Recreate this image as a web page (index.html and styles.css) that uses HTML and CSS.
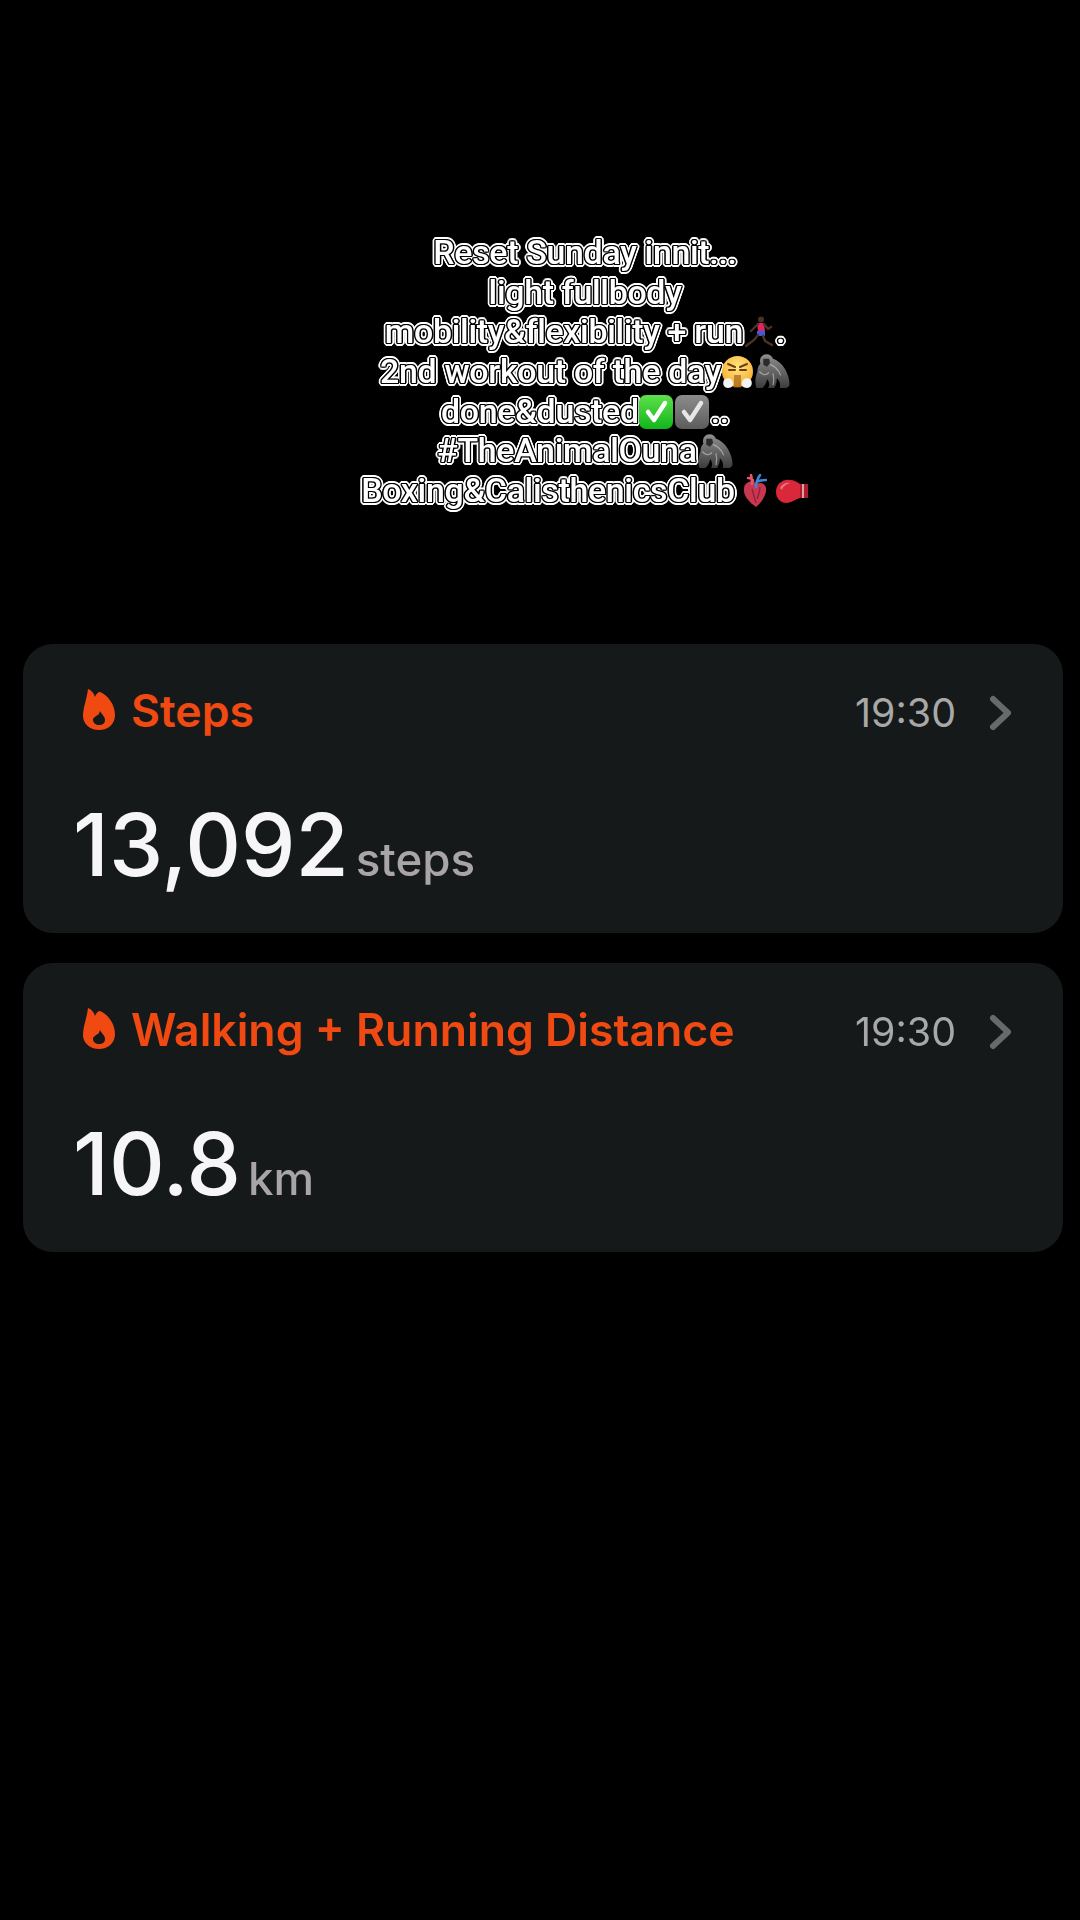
FILE: index.html
```html
<!DOCTYPE html>
<html lang="en">
<head>
<meta charset="utf-8">
<title>Reset Sunday</title>
<link rel="stylesheet" href="styles.css">
</head>
<body>
<svg class="defs" width="0" height="0" aria-hidden="true">
  <defs>
    <linearGradient id="fur" x1="0" y1="0" x2="0" y2="1"><stop offset="0" stop-color="#8f8f8f"/><stop offset="1" stop-color="#3c3c3c"/></linearGradient>
    <linearGradient id="green" x1="0" y1="0" x2="0" y2="1"><stop offset="0" stop-color="#5ee04a"/><stop offset="1" stop-color="#12b51c"/></linearGradient>
    <linearGradient id="grey" x1="0" y1="0" x2="0" y2="1"><stop offset="0" stop-color="#8c8c8c"/><stop offset="1" stop-color="#5c5c5c"/></linearGradient>
    <radialGradient id="face" cx=".5" cy=".35" r=".7"><stop offset="0" stop-color="#ffe680"/><stop offset="1" stop-color="#f7a928"/></radialGradient>
    <symbol id="flame" viewBox="0 0 32 41">
      <path fill="#f04a12" d="M5 0C8 1 11 4 12 8C13 5 15 3 17 3C25 6 32 16 32 26C32 35 25 41 16 41C7 41 0 35 0 27C0 19 4 9 5 0Z"/>
      <path fill="#16191a" d="M17 22C18 25 22 27 22 31C22 35 19 36 16 36C13 36 10 34 10 31C10 28 13 28 14 26C15 27 16 25 17 22Z"/>
    </symbol>
    <symbol id="gorilla" viewBox="0 0 36 36">
      <path fill="url(#fur)" d="M9 1C13-1 18 1 19 5C23 6 28 10 31 15C34 20 36 26 36 31C36 34 33 35 30 35L26 35C27 31 26 28 23 25C23 29 22 33 20 35L14 35C16 32 15 28 13 26C12 30 11 33 8 35L2 35C0 30 1 23 3 18C3 14 4 12 6 10C5 6 6 3 9 1Z"/>
      <path fill="#2b2b2b" d="M9 5L15 5L16 9L13 13L9 11Z"/>
      <path fill="none" stroke="#c4c4c4" stroke-width="1.3" opacity=".65" d="M16 11C20 12 25 16 27 22M5 18C8 22 12 22 15 19M19 20C20 24 20 28 19 32"/>
    </symbol>
  </defs>
</svg>

<main class="page">
  <section class="caption">
    <p class="caption-line">Reset Sunday innit...</p>
    <p class="caption-line">light fullbody</p>
    <p class="caption-line">mobility&amp;flexibility + run<svg class="emoji runner" viewBox="0 0 28 32" role="img" aria-label="person running">
        <circle cx="16" cy="3.5" r="3" fill="#4a3326"/>
        <path fill="#e0245e" d="M12 7L19 7L20 15L13 15Z"/>
        <path fill="#3b5bdb" d="M12 15L20 15L20 20L12 20Z"/>
        <path fill="none" stroke="#4a3326" stroke-width="2.4" stroke-linecap="round" d="M13 19L9 24L1 30M18 20L20 25L27 29M13 8L9 12L6 15M19 8L23 13L26 11"/>
      </svg>.</p>
    <p class="caption-line">2nd workout of the day<svg class="emoji huff" viewBox="0 0 33 32" role="img" aria-label="face with steam from nose">
        <circle cx="16.500" cy="15.500" r="15.500" fill="url(#face)"/>
        <path fill="none" stroke="#6b3f12" stroke-width="2" stroke-linecap="round" d="M7 8L14 11M26 8L19 11M8 14L14 14M25 14L19 14"/>
        <path fill="#f4f4f4" d="M3 24C6 21 11 22 12 26C13 29 11 32 7 32C3 32 1 28 3 24ZM30 24C27 21 22 22 21 26C20 29 22 32 26 32C30 32 32 28 30 24Z"/>
        <path fill="#8a4a12" d="M13 19L20 19L20 32L13 32Z" opacity=".55"/>
      </svg><svg class="emoji gorilla" role="img" aria-label="gorilla"><use href="#gorilla"/></svg></p>
    <p class="caption-line">done&amp;dusted<svg class="emoji box" viewBox="0 0 34 34" role="img" aria-label="check mark button">
        <rect width="34" height="34" rx="7" fill="url(#green)"/>
        <path fill="none" stroke="#fff" stroke-width="4.500" stroke-linecap="round" stroke-linejoin="round" d="M9 17L15 25L26 8"/>
      </svg><svg class="emoji box" viewBox="0 0 34 34" role="img" aria-label="check box with check">
        <rect width="34" height="34" rx="7" fill="url(#grey)"/>
        <path fill="none" stroke="#e6e6e6" stroke-width="4.500" stroke-linecap="round" stroke-linejoin="round" d="M9 17L15 25L26 8"/>
      </svg>..</p>
    <p class="caption-line">#TheAnimalOuna<svg class="emoji gorilla" role="img" aria-label="gorilla"><use href="#gorilla"/></svg></p>
    <p class="caption-line">Boxing&amp;CalisthenicsClub <svg class="emoji heart" viewBox="0 0 24 33" role="img" aria-label="anatomical heart">
        <path fill="#c9364f" d="M4 9C8 6 12 8 14 10C17 8 22 9 23 14C24 21 18 29 13 33C7 29 0 22 1 15C1 12 2 10 4 9Z"/>
        <path fill="none" stroke="#3d86d6" stroke-width="2.600" stroke-linecap="round" d="M13 13C13 8 15 4 17 1M14 8C17 6 20 6 23 6"/>
        <path fill="none" stroke="#e2556e" stroke-width="2.600" stroke-linecap="round" d="M9 10C9 6 9 4 8 1M5 4C8 4 10 5 10 7"/>
        <path fill="none" stroke="#8c1f36" stroke-width="1.200" d="M9 15C11 20 11 24 13 29M17 13C17 18 15 22 14 25"/>
      </svg><span class="gap"> </span><svg class="emoji glove" viewBox="0 0 34 24" role="img" aria-label="boxing glove">
        <path fill="#d8283a" d="M1 13C1 5 8 0 15 1C19 1 22 3 25 5L25 19C21 20 18 23 12 24C5 24 1 19 1 13Z"/>
        <path fill="#f1707c" d="M5 9C7 5 11 3 15 4C12 5 8 7 7 11Z"/>
        <path fill="#b01c2c" d="M25 5L33 5L33 19L25 19Z"/>
        <path fill="#e9dcdc" d="M27 5L29 5L29 19L27 19Z" opacity=".7"/>
      </svg></p>
  </section>

  <section class="cards">
    <article class="card">
      <header class="card-head">
        <svg class="flame" aria-hidden="true"><use href="#flame"/></svg>
        <h2 class="card-title">Steps</h2>
        <time class="card-time">19:30</time>
        <svg class="chevron" viewBox="0 0 24 36" aria-hidden="true"><path d="M4 4L19 18L4 32"/></svg>
      </header>
      <p class="metric"><span class="metric-value">13,092</span><span class="metric-unit">steps</span></p>
    </article>
    <article class="card">
      <header class="card-head">
        <svg class="flame" aria-hidden="true"><use href="#flame"/></svg>
        <h2 class="card-title">Walking + Running Distance</h2>
        <time class="card-time">19:30</time>
        <svg class="chevron" viewBox="0 0 24 36" aria-hidden="true"><path d="M4 4L19 18L4 32"/></svg>
      </header>
      <p class="metric"><span class="metric-value">10.8</span><span class="metric-unit">km</span></p>
    </article>
  </section>
</main>
</body>
</html>
```

FILE: styles.css
```css
* { box-sizing: border-box; }
html, body { margin: 0; background: #000; }
body { width: 1080px; height: 1920px; overflow: hidden; font-family: Inter, "Liberation Sans", sans-serif; }
.defs { display: block; height: 0; }
.page { display: flex; flex-direction: column; }

.caption {
  display: flex; flex-direction: column; align-items: center;
  padding: 233px 0 0 90px; height: 644px;
  filter: blur(0.5px);
}
.caption-line {
  margin: 0; height: 39.7px; line-height: 39.7px; white-space: pre;
  display: flex; align-items: center;
  font-family: Roboto, "Liberation Sans", sans-serif; font-size: 33.9px; font-weight: 500; color: #fff;
  letter-spacing: -0.3px;
  text-shadow:
    1.4px 0 0 #000, -1.4px 0 0 #000, 0 1.4px 0 #000, 0 -1.4px 0 #000,
    1px 1px 0 #000, -1px 1px 0 #000, 1px -1px 0 #000, -1px -1px 0 #000,
    3px 0 0 #fff, -3px 0 0 #fff, 0 3px 0 #fff, 0 -3px 0 #fff,
    2.1px 2.1px 0 #fff, -2.1px 2.1px 0 #fff, 2.1px -2.1px 0 #fff, -2.1px -2.1px 0 #fff,
    2.8px 1.2px 0 #fff, -2.8px 1.2px 0 #fff, 2.8px -1.2px 0 #fff, -2.8px -1.2px 0 #fff,
    1.2px 2.8px 0 #fff, -1.2px 2.8px 0 #fff, 1.2px -2.8px 0 #fff, -1.2px -2.8px 0 #fff;
}
.emoji { flex: none; display: block; }
.runner { width: 28px; height: 32px; margin: 0 3px 0 2px; }
.huff { width: 33px; height: 32px; }
.gorilla { width: 36px; height: 35px; }
.box { width: 34px; height: 34px; margin-right: 2px; }
.heart { width: 24px; height: 33px; }
.gap { width: 8px; }
.glove { width: 34px; height: 24px; }

.cards { display: flex; flex-direction: column; gap: 30.5px; padding: 0 17px 0 23px; filter: blur(0.5px); }
.card {
  height: 288.5px; background: #16191a; border-radius: 30px;
  padding: 37px 50px 0;
}
.card-head { display: flex; align-items: center; height: 60px; }
.flame { width: 32px; height: 41px; margin: 0 16px 4px 10px; flex: none; }
.card-title { margin: 0; font-size: 44.6px; font-weight: 600; color: #f04a12; }
.card-time { margin: 4px 0 0 auto; font-size: 39.4px; font-weight: 400; color: #a8a8a8; }
.chevron { width: 24px; height: 36px; margin: 4px 0 0 33px; flex: none; }
.chevron path { fill: none; stroke: #686a6a; stroke-width: 6; stroke-linecap: round; stroke-linejoin: round; }
.metric { margin: 54px 0 0; display: flex; align-items: baseline; gap: 7px; }
.metric-value { font-size: 86.5px; font-weight: 500; color: #f6f5f7; line-height: 100px; }
.metric-unit { font-size: 45.7px; font-weight: 500; color: #a8a4a8; }
```
